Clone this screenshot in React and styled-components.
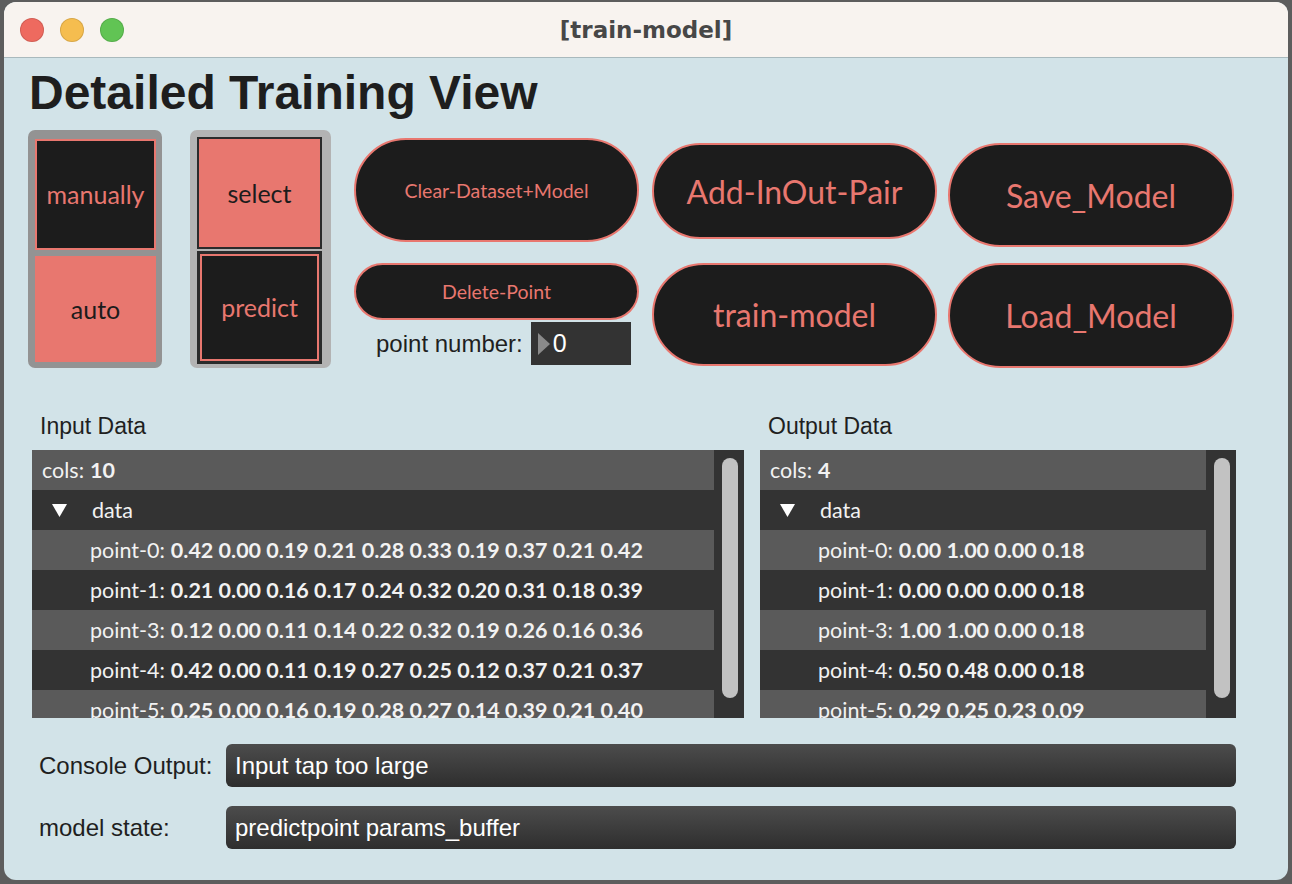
import React from 'react';
import styled, { createGlobalStyle } from 'styled-components';

const salmon = '#e8776f';
const ink = '#1c1c1c';

const inputRows = [
  ['point-0', '0.42 0.00 0.19 0.21 0.28 0.33 0.19 0.37 0.21 0.42'],
  ['point-1', '0.21 0.00 0.16 0.17 0.24 0.32 0.20 0.31 0.18 0.39'],
  ['point-3', '0.12 0.00 0.11 0.14 0.22 0.32 0.19 0.26 0.16 0.36'],
  ['point-4', '0.42 0.00 0.11 0.19 0.27 0.25 0.12 0.37 0.21 0.37'],
  ['point-5', '0.25 0.00 0.16 0.19 0.28 0.27 0.14 0.39 0.21 0.40'],
];

const outputRows = [
  ['point-0', '0.00 1.00 0.00 0.18'],
  ['point-1', '0.00 0.00 0.00 0.18'],
  ['point-3', '1.00 1.00 0.00 0.18'],
  ['point-4', '0.50 0.48 0.00 0.18'],
  ['point-5', '0.29 0.25 0.23 0.09'],
];

const GlobalStyle = createGlobalStyle`
  body {
    margin: 0;
    background: #5d5d5d;
    font-family: "Liberation Sans", Arial, sans-serif;
    overflow: hidden;
  }
`;

const Window = styled.div`
  margin: 2px 0 0 4px;
  width: 1284px;
  height: 878px;
  border-radius: 12px;
  overflow: hidden;
  background: #d2e3e8;
  display: flex;
  flex-direction: column;
`;

const TitleBar = styled.div`
  height: 56px;
  box-sizing: border-box;
  background: #f8f3ef;
  border-bottom: 1px solid #a9b9bd;
  display: grid;
  grid-template-columns: 1fr auto 1fr;
  align-items: center;
`;

const Lights = styled.div`
  display: flex;
  gap: 16px;
  padding-left: 16px;
`;

const Light = styled.span`
  width: 24px;
  height: 24px;
  border-radius: 50%;
  background: ${p => p.color};
  box-shadow: inset 0 0 0 1px rgba(0, 0, 0, 0.12);
`;

const WindowTitle = styled.div`
  font-family: "DejaVu Sans", sans-serif;
  font-weight: bold;
  font-size: 23px;
  color: #474747;
`;

const Content = styled.div`
  flex: 1;
  padding: 11px 52px 0 24px;
`;

const Heading = styled.h1`
  margin: 0 0 0 1px;
  font-size: 48px;
  line-height: 47px;
  font-weight: bold;
  color: #1e1e1e;
`;

const ControlRow = styled.div`
  margin-top: 14px;
  height: 238px;
  display: flex;
  align-items: flex-start;
`;

const TogglePanel = styled.div`
  width: ${p => p.w}px;
  height: 238px;
  box-sizing: border-box;
  border-radius: 7px;
  background: ${p => p.bg};
  padding: ${p => p.pad};
  margin-right: ${p => p.gap}px;
  display: flex;
  flex-direction: column;
  gap: ${p => p.inner}px;
`;

const Toggle = styled.div`
  flex: 1;
  display: flex;
  align-items: center;
  justify-content: center;
  font-family: Lato, sans-serif;
  font-size: 25px;
  box-sizing: border-box;
  background: ${p => (p.on ? salmon : ink)};
  color: ${p => (p.on ? ink : salmon)};
  border: ${p => p.border};
  box-shadow: ${p => p.ring || 'none'};
`;

const MidCol = styled.div`
  width: 285px;
  margin-right: 13px;
  padding-top: 8px;
  display: flex;
  flex-direction: column;
`;

const Pill = styled.div`
  height: ${p => p.h}px;
  box-sizing: border-box;
  border: 2px solid ${salmon};
  border-radius: 60px;
  background: ${ink};
  color: ${salmon};
  font-family: Lato, sans-serif;
  font-size: ${p => p.size}px;
  display: flex;
  align-items: center;
  justify-content: center;
  margin-top: ${p => p.mt || 0}px;
`;

const PointRow = styled.div`
  margin-top: 2px;
  padding-left: 22px;
  display: flex;
  align-items: center;
  gap: 8px;
`;

const PointLabel = styled.span`
  font-size: 24px;
  color: #1f1f1f;
`;

const NumberBox = styled.div`
  width: 100px;
  height: 43px;
  background: #333;
  display: flex;
  align-items: center;
  gap: 3px;
  padding-left: 7px;
  box-sizing: border-box;
  color: #fff;
  font-size: 25px;
`;

const PillGrid = styled.div`
  padding-top: 13px;
  display: grid;
  grid-template-columns: 285px 286px;
  grid-template-rows: 104px 105px;
  column-gap: 11px;
  row-gap: 16px;
  align-items: start;
`;

const DataSection = styled.div`
  margin-top: 45px;
  padding-left: 4px;
  display: flex;
  gap: 16px;
`;

const DataCol = styled.div`
  width: ${p => p.w}px;
`;

const SectionLabel = styled.div`
  font-size: 23px;
  line-height: 26px;
  color: #1f1f1f;
  padding-left: 8px;
  margin-bottom: 11px;
`;

const Table = styled.div`
  height: 268px;
  overflow: hidden;
  display: flex;
  background: #333;
`;

const Rows = styled.div`
  flex: 1;
  font-family: Lato, sans-serif;
  font-size: 21.5px;
  color: #f2f2f2;
`;

const Row = styled.div`
  height: 40px;
  display: flex;
  align-items: center;
  gap: 6px;
  padding-left: ${p => p.indent}px;
  background: ${p => (p.light ? '#5a5a5a' : '#333')};
  white-space: nowrap;
`;

const Bold = styled.b`
  font-weight: bold;
`;

const ScrollTrack = styled.div`
  width: 30px;
  padding: 8px 0 0 8px;
  box-sizing: border-box;
`;

const Thumb = styled.div`
  width: 16px;
  height: 240px;
  border-radius: 8px;
  background: #c2c2c2;
`;

const ConsoleRow = styled.div`
  display: flex;
  align-items: center;
  padding-left: 11px;
  margin-top: ${p => p.mt}px;
`;

const ConsoleLabel = styled.div`
  width: 187px;
  font-size: 24px;
  color: #1f1f1f;
`;

const Field = styled.div`
  flex: 1;
  height: 43px;
  border-radius: 6px;
  background: linear-gradient(#4c4c4c, #2e2e2e);
  display: flex;
  align-items: center;
  padding-left: 9px;
  color: #fff;
  font-size: 24px;
`;

const DownArrow = () => (
  <svg width="15" height="14" viewBox="0 0 15 14">
    <polygon points="0,1 15,1 7.5,14" fill="#fff" />
  </svg>
);

const RightArrow = () => (
  <svg width="12" height="22" viewBox="0 0 12 22">
    <polygon points="0,0 12,11 0,22" fill="#8a8a8a" />
  </svg>
);

function DataTable({ cols, rows }) {
  return (
    <Table>
      <Rows>
        <Row light indent={10}>
          <span>cols:</span><Bold>{cols}</Bold>
        </Row>
        <Row indent={20}>
          <DownArrow />
          <span style={{ marginLeft: 19 }}>data</span>
        </Row>
        {rows.map(([name, vals], i) => (
          <Row key={name} light={i % 2 === 0} indent={58}>
            <span>{name}:</span><Bold>{vals}</Bold>
          </Row>
        ))}
      </Rows>
      <ScrollTrack>
        <Thumb />
      </ScrollTrack>
    </Table>
  );
}

export default function App() {
  return (
    <>
      <GlobalStyle />
      <Window>
        <TitleBar>
          <Lights>
            <Light color="#ee6a5f" />
            <Light color="#f5bd4f" />
            <Light color="#61c454" />
          </Lights>
          <WindowTitle>[train-model]</WindowTitle>
          <div />
        </TitleBar>
        <Content>
          <Heading>Detailed Training View</Heading>
          <ControlRow>
            <TogglePanel w={134} bg="#939393" pad="9px 6px 6px 7px" gap={28} inner={6}>
              <Toggle border={`2px solid ${salmon}`}>manually</Toggle>
              <Toggle on border="none">auto</Toggle>
            </TogglePanel>
            <TogglePanel w={141} bg="#b3b3b3" pad="7px 9px 4px 7px" gap={23} inner={2}>
              <Toggle on border="2px solid #2b2b2b">select</Toggle>
              <Toggle border="3px solid #2b2b2b" ring={`inset 0 0 0 2px ${salmon}`}>predict</Toggle>
            </TogglePanel>
            <MidCol>
              <Pill h={104} size={19.5}>Clear-Dataset+Model</Pill>
              <Pill h={57} size={19.5} mt={21}>Delete-Point</Pill>
              <PointRow>
                <PointLabel>point number:</PointLabel>
                <NumberBox>
                  <RightArrow />
                  <span>0</span>
                </NumberBox>
              </PointRow>
            </MidCol>
            <PillGrid>
              <Pill h={96} size={32}>Add-InOut-Pair</Pill>
              <Pill h={104} size={32}>Save_Model</Pill>
              <Pill h={103} size={32}>train-model</Pill>
              <Pill h={105} size={32}>Load_Model</Pill>
            </PillGrid>
          </ControlRow>
          <DataSection>
            <DataCol w={712}>
              <SectionLabel>Input Data</SectionLabel>
              <DataTable cols="10" rows={inputRows} />
            </DataCol>
            <DataCol w={476}>
              <SectionLabel>Output Data</SectionLabel>
              <DataTable cols="4" rows={outputRows} />
            </DataCol>
          </DataSection>
          <ConsoleRow mt={26}>
            <ConsoleLabel>Console Output:</ConsoleLabel>
            <Field>Input tap too large</Field>
          </ConsoleRow>
          <ConsoleRow mt={19}>
            <ConsoleLabel>model state:</ConsoleLabel>
            <Field>predictpoint params_buffer</Field>
          </ConsoleRow>
        </Content>
      </Window>
    </>
  );
}
